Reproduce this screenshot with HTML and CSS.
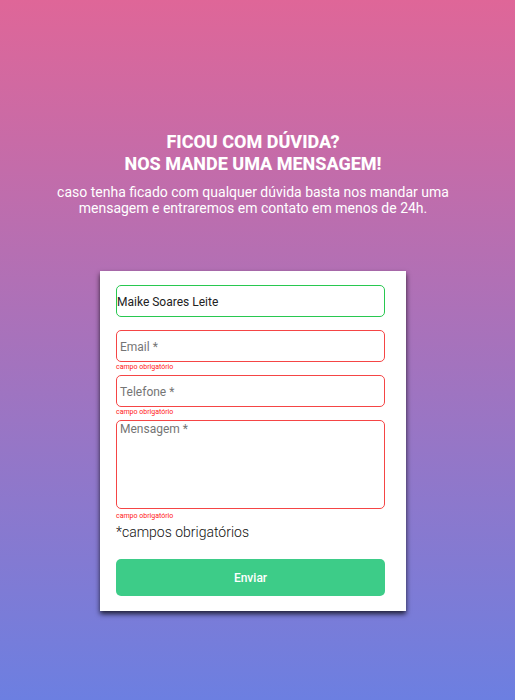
FILE: index.html
```html
<!DOCTYPE html>
<html lang="pt-BR">
<head>
<meta charset="utf-8">
<meta name="viewport" content="width=device-width, initial-scale=1">
<title>Contato</title>
<link rel="stylesheet" href="styles.css">
</head>
<body>
<main class="contact">
  <header class="intro">
    <h1 class="title">FICOU COM DÚVIDA?<br>NOS MANDE UMA MENSAGEM!</h1>
    <p class="subtitle">caso tenha ficado com qualquer dúvida basta nos mandar uma mensagem e entraremos em contato em menos de 24h.</p>
  </header>
  <form class="card" novalidate>
    <div class="field">
      <input class="control valid" type="text" aria-label="Nome" value="Maike Soares Leite">
    </div>
    <div class="field">
      <input class="control invalid" type="email" aria-label="Email" placeholder="Email *">
      <span class="error">campo obrigatório</span>
    </div>
    <div class="field">
      <input class="control invalid" type="tel" aria-label="Telefone" placeholder="Telefone *">
      <span class="error">campo obrigatório</span>
    </div>
    <div class="field message">
      <textarea class="control invalid" aria-label="Mensagem" placeholder="Mensagem *"></textarea>
      <span class="error">campo obrigatório</span>
    </div>
    <p class="note">*campos obrigatórios</p>
    <button class="submit" type="submit">Enviar</button>
  </form>
</main>
</body>
</html>
```
FILE: styles.css
```css
* {
  box-sizing: border-box;
  margin: 0;
  padding: 0;
}

body {
  min-height: 100vh;
  background: linear-gradient(#df6698, #6c7fe1);
  font-family: Roboto, "Liberation Sans", sans-serif;
}

.contact {
  display: flex;
  flex-direction: column;
  align-items: center;
  gap: 55px;
  padding: 131px 25px 32px 16px;
}

.intro {
  max-width: 400px;
  color: #fff;
  text-align: center;
}

.title {
  margin-bottom: 9px;
  font-size: 18px;
  font-weight: 800;
  line-height: 22px;
}

.subtitle {
  font-size: 14px;
  font-weight: 400;
  line-height: 16px;
}

.card {
  width: 100%;
  max-width: 306px;
  padding: 14px 21px 15px 16px;
  background: #fff;
  box-shadow: 0 3px 5px rgba(0, 0, 0, 0.75);
}

.field {
  display: flex;
  flex-direction: column;
  height: 45px;
}

.control {
  width: 100%;
  height: 32px;
  padding-top: 2px;
  border: 1px solid;
  border-radius: 5px;
  background: #fff;
  color: #222;
  font: 12px Roboto, "Liberation Sans", sans-serif;
  outline: none;
}

.control::placeholder {
  padding-left: 3px;
  color: #757575;
}

.valid {
  border-color: #28c850;
}

.invalid {
  border-color: #f54545;
}

.error {
  padding-top: 1px;
  color: #ff1818;
  font-size: 7px;
  line-height: 8px;
}

.message {
  height: 104px;
}

.message .control {
  height: 89px;
  padding-top: 1px;
  resize: none;
}

.message .error {
  padding-top: 3px;
}

.note {
  margin-bottom: 18px;
  color: #111;
  font-size: 14px;
  font-weight: 300;
  line-height: 17px;
}

.submit {
  display: block;
  width: 100%;
  height: 37px;
  border: 0;
  border-radius: 5px;
  background: #3dcc88;
  color: #fff;
  font: 500 12px Roboto, "Liberation Sans", sans-serif;
}
```
